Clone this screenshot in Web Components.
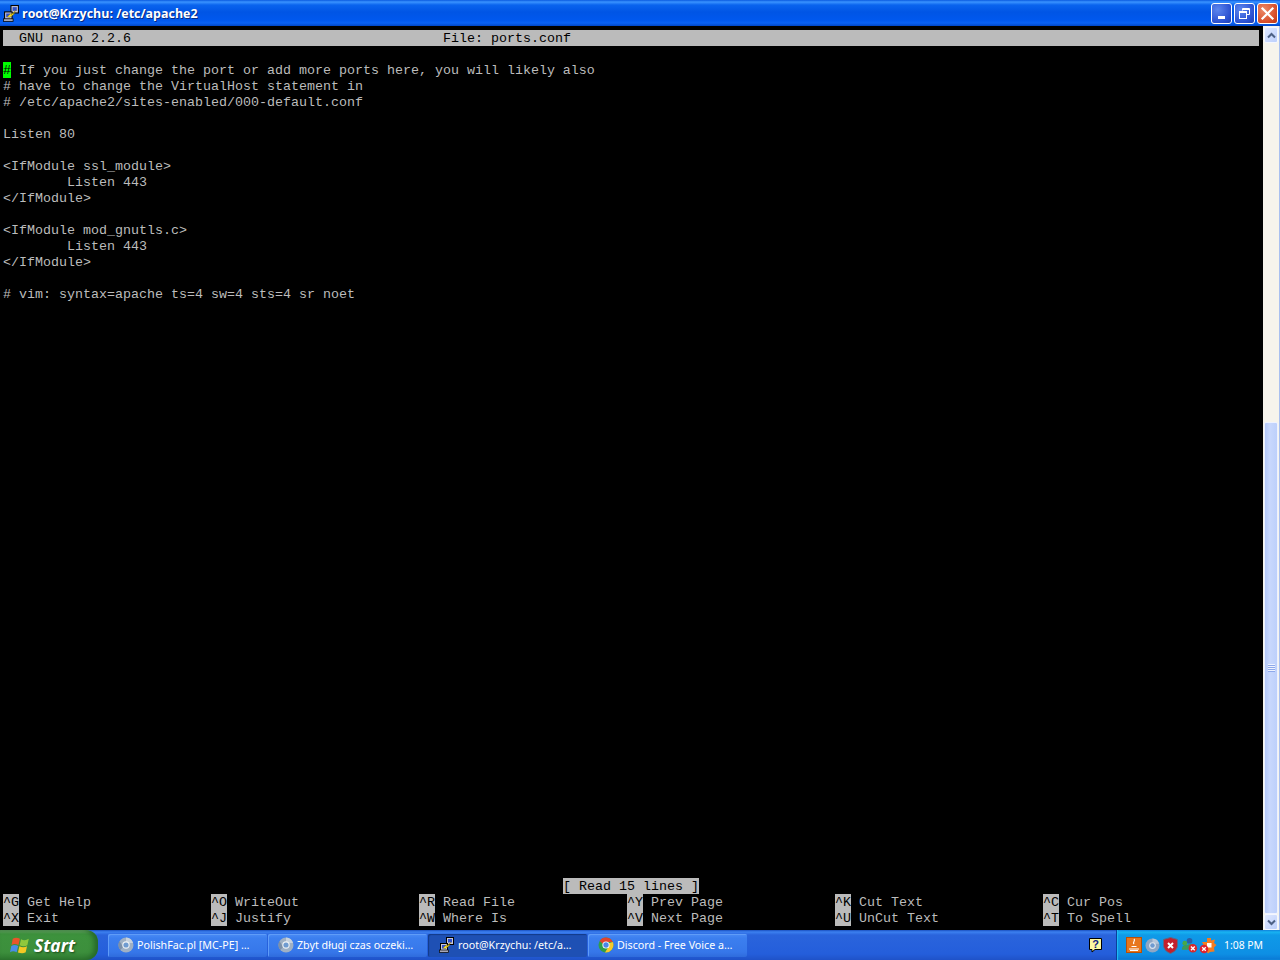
<!DOCTYPE html>
<html>
<head>
<meta charset="utf-8">
<title>root@Krzychu: /etc/apache2</title>
<style>
  html, body { margin: 0; padding: 0; height: 100%; overflow: hidden; background: #000; }
  body { display: flex; flex-direction: column; height: 960px; }
</style>
</head>
<body>
<xp-window title="root@Krzychu: /etc/apache2">
  <nano-screen></nano-screen>
  <xp-scrollbar></xp-scrollbar>
</xp-window>
<xp-taskbar>
  <task-button icon="chrome-gray">PolishFac.pl [MC-PE] …</task-button>
  <task-button icon="chrome-gray">Zbyt długi czas oczeki…</task-button>
  <task-button icon="putty" active>root@Krzychu: /etc/a…</task-button>
  <task-button icon="chrome">Discord - Free Voice a…</task-button>
</xp-taskbar>

<script>
const ICONS = {
  putty: `<svg width="16" height="16" viewBox="0 0 16 16">
    <rect x="7.5" y="0.5" width="7" height="7" fill="#c8c8d8" stroke="#000"/><rect x="9" y="2" width="4" height="3.5" fill="#3050c8"/>
    <rect x="1.5" y="6.5" width="7" height="7" fill="#c8c8d8" stroke="#000"/><rect x="3" y="8" width="4" height="3.5" fill="#3050c8"/>
    <rect x="0.5" y="13" width="9" height="2.5" fill="#a8a8b8" stroke="#000" stroke-width=".7"/>
    <path d="M4 11 L8 7.5 L7.5 9.5 L12 5 L9.5 8.5 L11 8 L6.5 11.5Z" fill="#ffe820" stroke="#8a7000" stroke-width=".4"/></svg>`,
  'chrome-gray': `<svg width="16" height="16" viewBox="0 0 16 16">
    <circle cx="8" cy="8" r="7.5" fill="#9fb0c4"/><path d="M8 .5A7.5 7.5 0 0 1 15 6H8Z" fill="#c7d2de"/>
    <path d="M1.5 4 5 10 2.5 13A7.5 7.5 0 0 1 1.5 4Z" fill="#7d90a8"/>
    <circle cx="8" cy="8" r="3.7" fill="#eef2f6"/><circle cx="8" cy="8" r="2.6" fill="#6f9bd0"/></svg>`,
  chrome: `<svg width="16" height="16" viewBox="0 0 16 16">
    <circle cx="8" cy="8" r="7.5" fill="#2f9e48"/>
    <path d="M1.6 4A7.5 7.5 0 0 1 14.8 5H8A3 3 0 0 0 5.2 7Z" fill="#e0442f"/>
    <path d="M14.8 5A7.5 7.5 0 0 1 7 15.4L10.4 10A3 3 0 0 0 10.6 6.2Z" fill="#f7c92c"/>
    <circle cx="8" cy="8" r="3.6" fill="#fff"/><circle cx="8" cy="8" r="2.7" fill="#4a86e8"/></svg>`
};

const winTpl = document.createElement('template');
winTpl.innerHTML = `
  <style>
    :host { display: flex; flex-direction: column; height: 930px; flex: none; background: #0a4de0; }
    .title {
      height: 26px; flex: none; display: flex; align-items: center; gap: 2px; padding: 0 2px 0 3px;
      background: linear-gradient(180deg, #0a5ae0 0, #3a93ff 2px, #0a64ee 5px, #0055e5 12px, #0058ee 20px, #0a62f4 23px, #0047c8 26px);
      color: #fff; font: bold 12.45px "Open Sans", "DejaVu Sans", sans-serif; text-shadow: 1px 1px 0 #0a2a80;
    }
    .text { flex: 1; white-space: pre; line-height: 28px; height: 26px; }
    .btns { display: flex; gap: 2px; }
    .btn {
      width: 21px; height: 21px; box-sizing: border-box; border: 1px solid #fff; border-radius: 3px;
      background: radial-gradient(circle at 30% 30%, #5c86ee, #2a50d0 70%, #2040b0);
      display: flex; align-items: center; justify-content: center;
    }
    .btn.close { background: radial-gradient(circle at 30% 30%, #ec8a68, #d8502c 65%, #b83414); }
    .body { flex: 1; min-height: 0; display: flex; padding-left: 3px; background: #000; }
  </style>
  <div class="title">
    <svg width="17" height="17" viewBox="0 0 16 16" id="ico"></svg>
    <span class="text"></span>
    <div class="btns">
      <div class="btn"><svg width="13" height="13" viewBox="0 0 13 13"><rect x="3" y="9" width="7" height="3" fill="#fff"/></svg></div>
      <div class="btn"><svg width="13" height="13" viewBox="0 0 13 13" fill="none" stroke="#fff"><path d="M4.5 3.5V1.5H11.5V7.5H9"/><path d="M4.5 2.5H11" stroke-width="1"/><rect x="1.5" y="4.5" width="7" height="7"/><path d="M2 5.5H8"/></svg></div>
      <div class="btn close"><svg width="15" height="15" viewBox="0 0 15 15" stroke="#fff" stroke-width="2.2" stroke-linecap="square"><path d="M2.5 2.5 12.5 12.5M12.5 2.5 2.5 12.5"/></svg></div>
    </div>
  </div>
  <div class="body"><slot></slot></div>
`;
class XpWindow extends HTMLElement {
  constructor() {
    super();
    const root = this.attachShadow({ mode: 'open' });
    root.appendChild(winTpl.content.cloneNode(true));
    root.querySelector('.text').textContent = this.getAttribute('title');
    root.querySelector('#ico').innerHTML = ICONS.putty.replace(/^<svg[^>]*>|<\/svg>$/g, '');
  }
}
customElements.define('xp-window', XpWindow);

// one row of the terminal is 16px, one column 8px
const nanoTpl = document.createElement('template');
nanoTpl.innerHTML = `
  <style>
    :host {
      display: block; width: 1256px; flex: none; margin-top: 4px; color: #bcbcbc; background: #000;
      font: 13.34px/18px "Liberation Mono", "Courier New", monospace;
    }
    .row { height: 16px; white-space: pre; }
    .bar { background: #bbb; color: #000; display: flex; }
    .bar span:first-child { width: 440px; }
    .cur { background: #00ff00; color: #000; display: inline-block; height: 16px; vertical-align: top; }
    .status { display: flex; justify-content: flex-start; padding-left: 560px; }
    .status span { background: #bbb; color: #000; height: 16px; }
    .keys { display: grid; grid-template-columns: repeat(6, 208px); }
    .keys div { height: 16px; white-space: pre; }
    .keys b { font-weight: normal; background: #bbb; color: #000; display: inline-block; height: 16px; vertical-align: top; }
  </style>
  <div class="row bar"><span>  GNU nano 2.2.6</span><span>File: ports.conf</span></div>
  <div class="row"></div>
  <div class="row"><span class="cur">#</span> If you just change the port or add more ports here, you will likely also</div>
  <div class="row"># have to change the VirtualHost statement in</div>
  <div class="row"># /etc/apache2/sites-enabled/000-default.conf</div>
  <div class="row"></div>
  <div class="row">Listen 80</div>
  <div class="row"></div>
  <div class="row">&lt;IfModule ssl_module&gt;</div>
  <div class="row">        Listen 443</div>
  <div class="row">&lt;/IfModule&gt;</div>
  <div class="row"></div>
  <div class="row">&lt;IfModule mod_gnutls.c&gt;</div>
  <div class="row">        Listen 443</div>
  <div class="row">&lt;/IfModule&gt;</div>
  <div class="row"></div>
  <div class="row"># vim: syntax=apache ts=4 sw=4 sts=4 sr noet</div>
  <div class="row" style="height:576px"></div>
  <div class="row status"><span>[ Read 15 lines ]</span></div>
  <div class="keys">
    <div><b>^G</b> Get Help</div><div><b>^O</b> WriteOut</div><div><b>^R</b> Read File</div><div><b>^Y</b> Prev Page</div><div><b>^K</b> Cut Text</div><div><b>^C</b> Cur Pos</div>
    <div><b>^X</b> Exit</div><div><b>^J</b> Justify</div><div><b>^W</b> Where Is</div><div><b>^V</b> Next Page</div><div><b>^U</b> UnCut Text</div><div><b>^T</b> To Spell</div>
  </div>
`;
class NanoScreen extends HTMLElement {
  constructor() {
    super();
    this.attachShadow({ mode: 'open' }).appendChild(nanoTpl.content.cloneNode(true));
  }
}
customElements.define('nano-screen', NanoScreen);

const barTpl = document.createElement('template');
barTpl.innerHTML = `
  <style>
    :host {
      display: flex; flex-direction: column; width: 17px; flex: none; margin-left: 4px; box-sizing: border-box;
      background: #f6f4ec; padding: 1px 1px 0 1px; border-right: 1px solid #a9c0f0;
    }
    .arrow {
      height: 16px; flex: none; box-sizing: border-box; border: 1px solid #f4f7ff; border-radius: 2px;
      background: linear-gradient(135deg, #dfe8ff, #bccffb); display: flex; align-items: center; justify-content: center;
    }
    .space { flex: none; height: 379px; }
    .thumb {
      flex: 1; min-height: 0; box-sizing: border-box; border: 1px solid #eef2ff; border-radius: 2px;
      background: linear-gradient(90deg, #b4c8f8, #c8d8fd 40%, #bdd0fb);
      display: flex; align-items: center; justify-content: center;
    }
  </style>
  <div class="arrow"><svg width="9" height="7" viewBox="0 0 9 7" fill="none" stroke="#4d6185" stroke-width="2"><path d="M1 5.5 4.5 2 8 5.5"/></svg></div>
  <div class="space"></div>
  <div class="thumb"><svg width="7" height="8" viewBox="0 0 7 8" stroke="#eef3ff"><path d="M0 .5H7M0 2.5H7M0 4.5H7M0 6.5H7"/><path stroke="#8ea9ea" d="M0 1.5H7M0 3.5H7M0 5.5H7M0 7.5H7"/></svg></div>
  <div class="arrow"><svg width="9" height="7" viewBox="0 0 9 7" fill="none" stroke="#4d6185" stroke-width="2"><path d="M1 1.5 4.5 5 8 1.5"/></svg></div>
`;
class XpScrollbar extends HTMLElement {
  constructor() {
    super();
    this.attachShadow({ mode: 'open' }).appendChild(barTpl.content.cloneNode(true));
  }
}
customElements.define('xp-scrollbar', XpScrollbar);

const taskTpl = document.createElement('template');
taskTpl.innerHTML = `
  <style>
    :host {
      display: flex; align-items: center; gap: 3px; width: 159px; height: 23px; box-sizing: border-box; padding: 0 8px 0 10px;
      border-radius: 2px; flex: none; color: #fff; font: 10.7px "Noto Sans", "DejaVu Sans", sans-serif; white-space: nowrap; overflow: hidden;
      background: linear-gradient(180deg, #4a8cf6 0, #3c7fef 4px, #3677ea 18px, #2f6bdc 23px);
      box-shadow: inset 1px 1px 0 #5f9cf8;
    }
    :host([active]) {
      background: #1e50b4; box-shadow: inset 1px 1px 1px #123a88; padding-left: 11px;
    }
    svg { flex: none; }
  </style>
  <span id="ico" style="display:flex"></span><slot></slot>
`;
class TaskButton extends HTMLElement {
  constructor() {
    super();
    const root = this.attachShadow({ mode: 'open' });
    root.appendChild(taskTpl.content.cloneNode(true));
    root.querySelector('#ico').innerHTML = ICONS[this.getAttribute('icon')];
  }
}
customElements.define('task-button', TaskButton);

const tbTpl = document.createElement('template');
tbTpl.innerHTML = `
  <style>
    :host {
      display: flex; height: 30px; flex: none; align-items: center;
      background: linear-gradient(180deg, #1a50c0 0, #3c80f0 2px, #2a64dc 5px, #245edb 24px, #1f52c8 30px);
    }
    .start {
      width: 98px; height: 30px; flex: none; box-sizing: border-box; padding-left: 10px; display: flex; align-items: center; gap: 3px;
      border-radius: 0 12px 12px 0; color: #fff; font: italic bold 17.4px "Open Sans", "DejaVu Sans", sans-serif; text-shadow: 1px 1px 2px #1a4a1a;
      background: linear-gradient(180deg, #6ea76c 0, #3d923d 4px, #3c8f3c 22px, #2f7a30 30px);
      box-shadow: inset -4px 0 5px #26692a;
    }
    .tasks { display: flex; gap: 1px; margin-left: 10px; flex: 1; }
    .help { flex: none; width: 16px; height: 16px; margin-right: 12px; }
    .tray {
      flex: none; width: 164px; height: 30px; box-sizing: border-box; padding-left: 9px; display: flex; align-items: center; gap: 3px;
      background: linear-gradient(180deg, #0f78d8 0, #18b4f2 2px, #0f9ae8 5px, #0e8fe4 24px, #0a78d4 30px);
      border-left: 1px solid #0a3f9c; box-shadow: inset 1px 0 1px #20bdf6;
      color: #fff; font: 10.4px "Noto Sans", "DejaVu Sans", sans-serif;
    }
    .clock { margin-left: auto; margin-right: 17px; white-space: nowrap; }
  </style>
  <div class="start">
    <svg width="21" height="21" viewBox="0 0 19 19">
      <path d="M2.5 3.5C5 2 7 2.5 9 3.5L7.6 9C5.6 8 3.6 7.6 1.4 9Z" fill="#e8552a"/>
      <path d="M10 3.8C12.2 5 14.5 5 17 3.5L15.7 9.2C13.4 10.5 11 10.2 8.7 9.2Z" fill="#8fc83c"/>
      <path d="M1.2 10C3.4 8.6 5.4 9 7.4 10L6 15.6C4 14.6 2 14.4 0 15.6Z" fill="#4a8de8"/>
      <path d="M8.5 10.2C10.7 11.2 13 11.4 15.4 10.2L14.2 15.7C12 17 9.6 16.7 7.2 15.8Z" fill="#f4c824"/>
    </svg>
    <span>Start</span>
  </div>
  <div class="tasks"><slot></slot></div>
  <svg class="help" viewBox="0 0 16 16">
    <path d="M1.5 1.5H13.5V12.5H7L4 15V12.5H1.5Z" fill="#fff8a0" stroke="#000"/>
    <text x="7.5" y="11" font-family="Liberation Sans" font-weight="bold" font-size="11" text-anchor="middle" fill="#102080">?</text>
  </svg>
  <div class="tray">
    <svg width="16" height="16" viewBox="0 0 16 16"><rect x=".5" y=".5" width="15" height="15" fill="#e8761c" stroke="#b85008"/><path d="M3 12H13M4 13.5H12M8 2C10 4 6 5 8 7M5.5 9.5H10.5" stroke="#fff" stroke-width="1.2" fill="none"/></svg>
    <svg width="15" height="15" viewBox="0 0 16 16"><circle cx="8" cy="8" r="7.5" fill="#8ea6c4"/><path d="M8 .5A7.5 7.5 0 0 1 15 6H8Z" fill="#b7c6d8"/><circle cx="8" cy="8" r="3.6" fill="#dbe4ee"/><circle cx="8" cy="8" r="2.4" fill="#6f9bd0"/></svg>
    <svg width="15" height="17" viewBox="0 0 15 17"><path d="M7.5 .5 14.5 2.5V8C14.5 12 11.5 15 7.5 16.5 3.5 15 .5 12 .5 8V2.5Z" fill="#c4202c" stroke="#5a6a88"/><path d="M5 6 10 11M10 6 5 11" stroke="#fff" stroke-width="2"/></svg>
    <svg width="18" height="17" viewBox="0 0 19 17"><circle cx="9" cy="3.5" r="3" fill="#2a5fa8"/><circle cx="4" cy="6" r="2.5" fill="#48a848"/><path d="M1 13C1 9 3 8 5 8S8 10 8 13ZM6 9C7 6.5 12 6 13 9L12 11H7Z" fill="#3d9a5a"/><circle cx="12.5" cy="11.5" r="4.5" fill="#d8262c"/><path d="M10.5 9.5 14.5 13.5M14.5 9.5 10.5 13.5" stroke="#fff" stroke-width="1.4"/></svg>
    <svg style="margin-left:-3px" width="18" height="17" viewBox="0 0 18 17"><path d="M8 1H12V3.5L16 2.5 15 6 17.5 8 15 10.5 15.5 14.5 11 15 9 16.5 7 14 3 13.5 5 9 3 5 8 5Z" fill="#f47c20"/><rect x="8" y="6" width="4.5" height="4.5" fill="#fff"/><circle cx="5" cy="12" r="4.3" fill="#e0202c"/><path d="M3.2 10.2 6.8 13.8M6.8 10.2 3.2 13.8" stroke="#fff" stroke-width="1.3"/></svg>
    <span class="clock">1:08 PM</span>
  </div>
`;
class XpTaskbar extends HTMLElement {
  constructor() {
    super();
    this.attachShadow({ mode: 'open' }).appendChild(tbTpl.content.cloneNode(true));
  }
}
customElements.define('xp-taskbar', XpTaskbar);
</script>
</body>
</html>
